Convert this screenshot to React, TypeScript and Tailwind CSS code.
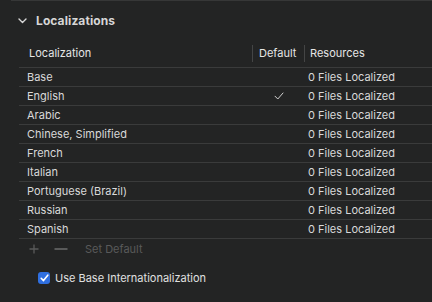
import React from "react";

const rows: { name: string; def?: boolean }[] = [
  { name: "Base" },
  { name: "English", def: true },
  { name: "Arabic" },
  { name: "Chinese, Simplified" },
  { name: "French" },
  { name: "Italian" },
  { name: "Portuguese (Brazil)" },
  { name: "Russian" },
  { name: "Spanish" },
];

export default function App() {
  return (
    <div
      className="w-[432px] h-[302px] bg-[#232424] text-[#dedede] overflow-hidden"
      style={{ fontFamily: "Inter, 'Noto Sans', sans-serif" }}
    >
      <div className="ml-[11px] h-px bg-[#363737]" />
      <div className="flex items-center h-[39px] pl-[18px] pt-px">
        <svg width="9" height="6" viewBox="0 0 9 6" className="mr-[9px]">
          <path d="M1 1 L4.5 4.5 L8 1" fill="none" stroke="#d8d8d8" strokeWidth="1.4" strokeLinecap="round" strokeLinejoin="round" />
        </svg>
        <span className="text-[12px] font-bold text-[#d6d6d6] tracking-[0.1px]">Localizations</span>
      </div>
      <div className="ml-[19px]">
        <div className="flex items-center h-[27px] text-[11px] text-[#e6e6e6]">
          <div className="w-[233px] pl-[10px]">Localization</div>
          <div className="w-px h-[17px] bg-[#444545]" />
          <div className="w-[51px] pl-[6px]">Default</div>
          <div className="w-px h-[17px] bg-[#444545]" />
          <div className="pl-[5px]">Resources</div>
        </div>
        {rows.map((r) => (
          <div key={r.name} className="flex items-center h-[19px] border-t border-[#3a3b3b] text-[11px] text-[#d9d9d9]">
            <div className="w-[234px] pl-[8px]">{r.name}</div>
            <div className="w-[52px] flex justify-center">
              {r.def && (
                <svg width="10" height="8" viewBox="0 0 10 8">
                  <path d="M1 4.2 L3.8 7 L9 1" fill="none" stroke="#d0d0d0" strokeWidth="1" strokeLinecap="round" strokeLinejoin="round" />
                </svg>
              )}
            </div>
            <div className="pl-[3px]">0 Files Localized</div>
          </div>
        ))}
        <div className="border-t border-[#3a3b3b]" />
        <div className="flex items-center h-[20px] text-[11px] text-[#595a5a]">
          <svg width="10" height="10" viewBox="0 0 10 10" className="ml-[10px]">
            <path d="M5 0.5 V9.5 M0.5 5 H9.5" stroke="#595a5a" strokeWidth="1.3" />
          </svg>
          <svg width="14" height="10" viewBox="0 0 14 10" className="ml-[15px]">
            <path d="M0.5 5 H13.5" stroke="#595a5a" strokeWidth="2" />
          </svg>
          <span className="ml-[17px]">Set Default</span>
        </div>
        <div className="flex items-center h-[22px] mt-[8px] pl-[19px]">
          <div className="w-[12px] h-[12px] rounded-[3px] bg-[#2f6fe0] flex items-center justify-center">
            <svg width="9" height="8" viewBox="0 0 9 8">
              <path d="M1.2 4.3 L3.5 6.6 L7.8 1.2" fill="none" stroke="#ffffff" strokeWidth="1.6" strokeLinecap="round" strokeLinejoin="round" />
            </svg>
          </div>
          <span className="ml-[5px] text-[11px] text-[#e0e0e0]">Use Base Internationalization</span>
        </div>
      </div>
    </div>
  );
}
